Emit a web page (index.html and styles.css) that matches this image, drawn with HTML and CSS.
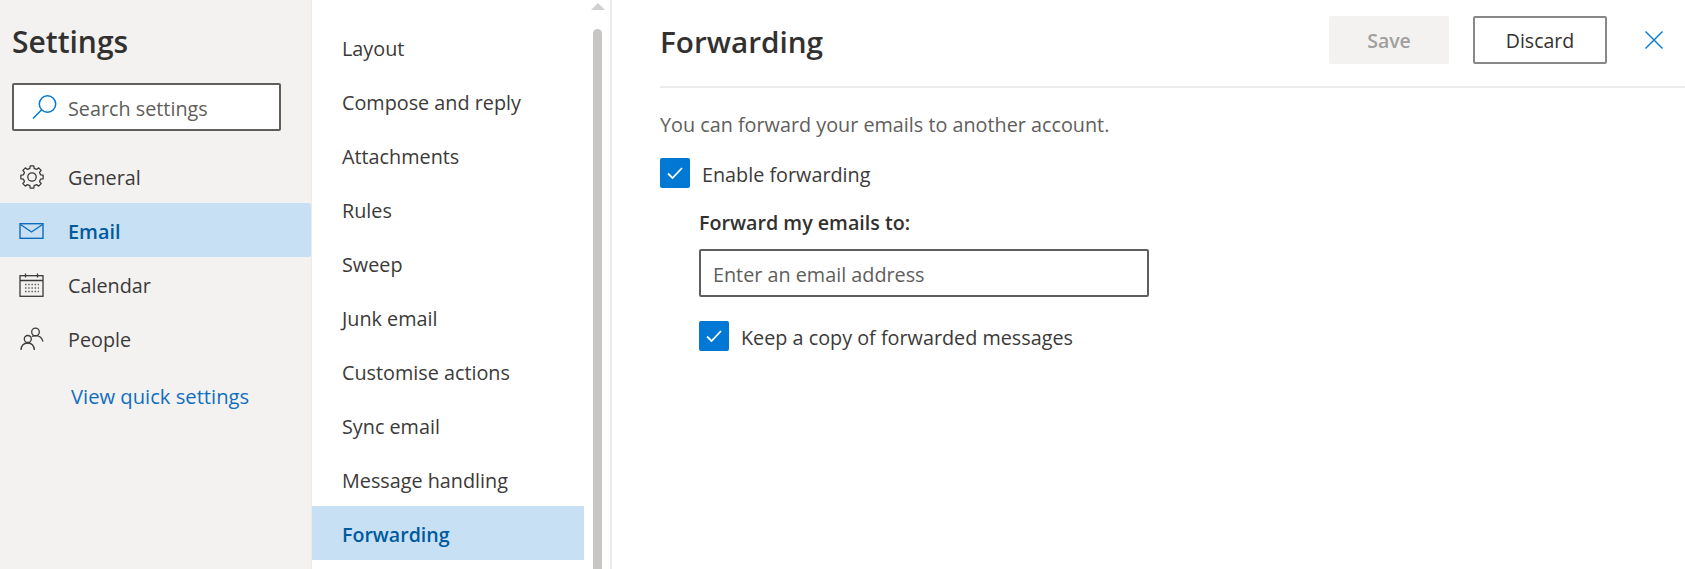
FILE: index.html
```html
<!DOCTYPE html>
<html lang="en">
<head>
<meta charset="utf-8">
<title>Settings</title>
<link rel="stylesheet" href="styles.css">
</head>
<body>
<div class="app">
  <aside class="nav">
    <h1 class="nav-title">Settings</h1>
    <div class="search">
      <svg class="search-icon" width="26" height="26" viewBox="0 0 26 26" fill="none" stroke="#0078d4" stroke-width="1.5"><circle cx="15.500" cy="10" r="8.200"/><path d="M9.700 15.800 1 24.500"/></svg>
      <span>Search settings</span>
    </div>
    <ul class="nav-list">
      <li class="nav-item">
        <svg class="nav-icon" width="26" height="26" viewBox="0 0 26 26" fill="none" stroke="#3b3a39" stroke-width="1.300" stroke-linejoin="round"><circle cx="13" cy="13" r="4.200"/><path d="M10.870 4.460 11.230 1.840H14.770L15.130 4.460 17.530 5.460 19.640 3.860 22.140 6.360 20.540 8.470 21.540 10.870 24.160 11.230V14.770L21.540 15.130 20.540 17.530 22.140 19.640 19.640 22.140 17.530 20.540 15.130 21.540 14.770 24.160H11.230L10.870 21.540 8.470 20.540 6.360 22.140 3.860 19.640 5.460 17.530 4.460 15.130 1.840 14.770V11.230L4.460 10.870 5.460 8.470 3.860 6.360 6.360 3.860 8.470 5.460Z"/></svg>
        <span>General</span>
      </li>
      <li class="nav-item is-active">
        <svg class="nav-icon" width="26" height="26" viewBox="0 0 26 26" fill="none" stroke="#0f6cbd" stroke-width="1.4"><rect x="1" y="5.7" width="23" height="14.6"/><path d="M1.5 6.5 12.5 14l11-7.500"/></svg>
        <span>Email</span>
      </li>
      <li class="nav-item">
        <svg class="nav-icon" width="26" height="26" viewBox="0 0 26 26" fill="none" stroke="#3b3a39" stroke-width="1.3"><rect x="1" y="3.700" width="23" height="20.600"/><path d="M1 8.500h23M6.500 1.500v4M18.500 1.500v4"/><path d="M6 12.500h14M6 16h14M6 19.500h14" stroke-dasharray="1.500 1.700" stroke="#605e5c"/></svg>
        <span>Calendar</span>
      </li>
      <li class="nav-item">
        <svg class="nav-icon" width="26" height="26" viewBox="0 0 26 26" fill="none" stroke="#3b3a39" stroke-width="1.300"><circle cx="16.500" cy="6" r="3.800"/><circle cx="8.800" cy="13" r="3.500"/><path d="M2 24c.3-4 2.800-7 6.800-7s6.200 3 6.600 7M12.800 10.500c1.300-.6 2.500-.9 3.700-.9 3.500 0 6.300 1.900 7.500 5.900"/></svg>
        <span>People</span>
      </li>
    </ul>
    <a class="quick-link">View quick settings</a>
  </aside>

  <nav class="sub">
    <ul class="sub-list">
      <li class="sub-item">Layout</li>
      <li class="sub-item">Compose and reply</li>
      <li class="sub-item">Attachments</li>
      <li class="sub-item">Rules</li>
      <li class="sub-item">Sweep</li>
      <li class="sub-item">Junk email</li>
      <li class="sub-item">Customise actions</li>
      <li class="sub-item">Sync email</li>
      <li class="sub-item">Message handling</li>
      <li class="sub-item is-active">Forwarding</li>
    </ul>
    <div class="scroll">
      <span class="scroll-arrow"></span>
      <span class="scroll-thumb"></span>
    </div>
  </nav>

  <main class="main">
    <header class="head">
      <h2 class="head-title">Forwarding</h2>
      <button class="btn btn-save">Save</button>
      <button class="btn btn-discard">Discard</button>
      <svg class="close" width="20" height="20" viewBox="0 0 20 20" fill="none" stroke="#0078d4" stroke-width="1.400"><path d="M1.500 1.500 18.500 18.500M18.500 1.500 1.500 18.500"/></svg>
    </header>
    <p class="desc">You can forward your emails to another account.</p>
    <label class="check">
      <span class="box"><svg width="18" height="14" viewBox="0 0 18 14" fill="none" stroke="#fff" stroke-width="1.800"><path d="M2 7.500 6.500 12 16 2"/></svg></span>
      <span class="check-text">Enable forwarding</span>
    </label>
    <div class="nested">
      <div class="field-label">Forward my emails to:</div>
      <div class="input">Enter an email address</div>
      <label class="check">
        <span class="box"><svg width="18" height="14" viewBox="0 0 18 14" fill="none" stroke="#fff" stroke-width="1.800"><path d="M2 7.500 6.500 12 16 2"/></svg></span>
        <span class="check-text">Keep a copy of forwarded messages</span>
      </label>
    </div>
  </main>
</div>
</body>
</html>
```
FILE: styles.css
```css
* { box-sizing: border-box; }
html, body { margin: 0; height: 100%; overflow: hidden; background: #fff; }
body { font-family: "Open Sans", "Noto Sans", sans-serif; font-size: 19.8px; color: #323130; }
h1, h2, p, ul { margin: 0; padding: 0; }
ul { list-style: none; }

.app { display: flex; height: 569px; }

.nav { width: 311px; flex: none; background: #f3f2f1; }
.nav-title { font-size: 30px; font-weight: 600; line-height: 40px; padding: 22px 0 0 12px; color: #323130; }
.search { display: flex; align-items: center; margin: 21px 0 0 12px; width: 269px; height: 48px; background: #fff; border: 2px solid #605e5c; border-radius: 2px; padding-left: 18px; color: #605e5c; }
.search-icon { flex: none; margin-right: 10px; }
.search span { padding-top: 2px; }
.nav-list { margin-top: 18px; }
.nav-item { display: flex; align-items: center; height: 54px; padding: 2px 0 0 19px; gap: 23px; color: #3b3a39; }
.nav-item.is-active { background: #c7e0f4; color: #005a9e; font-weight: 600; border-radius: 0 2px 2px 0; }
.nav-icon { flex: none; }
.quick-link { display: block; margin: 18px 0 0 71px; line-height: 26px; font-size: 20.200px; color: #106ebe; }

.sub { width: 301px; flex: none; display: flex; border-left: 1px solid #edebe9; border-right: 2px solid #edebe9; }
.sub-list { width: 272px; flex: none; padding-top: 20px; }
.sub-item { height: 54px; display: flex; align-items: center; padding: 2px 0 0 30px; color: #3b3a39; }
.sub-item.is-active { background: #c7e0f4; color: #005a9e; font-weight: 600; font-size: 19.600px; }
.scroll { width: 26px; display: flex; flex-direction: column; align-items: center; margin-left: 1px; }
.scroll-arrow { margin-top: 3px; width: 0; height: 0; border-left: 7px solid transparent; border-right: 7px solid transparent; border-bottom: 7px solid #d2d0ce; }
.scroll-thumb { margin-top: 19px; width: 9px; flex: 1; background: #c8c6c4; border-radius: 5px 5px 0 0; }

.main { flex: 1; padding-left: 48px; }
.head { display: flex; align-items: center; height: 88px; border-bottom: 2px solid #edebe9; padding-bottom: 6px; }
.head-title { flex: 1; font-size: 29.700px; font-weight: 600; padding-top: 2px; color: #323130; }
.btn { height: 48px; font: inherit; font-size: 19.500px; font-weight: 500; border-radius: 2px; }
.btn-save { width: 120px; background: #f3f2f1; border: none; color: #a19f9d; font-weight: 600; margin-right: 24px; }
.btn-discard { width: 134px; background: #fff; border: 2px solid #8a8886; color: #323130; }
.close { flex: none; margin: 0 21px 0 37px; }
.desc { margin-top: 22px; padding-top: 1px; line-height: 28px; color: #605e5c; }
.check { display: flex; align-items: center; gap: 12px; height: 30px; color: #3b3a39; }
.check-text { padding-top: 2px; }
.main > .check { margin-top: 19px; }
.box { width: 30px; height: 30px; flex: none; display: flex; align-items: center; justify-content: center; background: #0078d4; border-radius: 2px; }
.nested { padding-left: 39px; }
.field-label { margin-top: 21px; line-height: 28px; font-weight: 600; font-size: 19.700px; color: #323130; }
.input { margin-top: 12px; width: 450px; height: 48px; display: flex; align-items: center; padding: 3px 0 0 12px; border: 2px solid #605e5c; border-radius: 2px; color: #605e5c; }
.nested .check { margin-top: 24px; }
```
